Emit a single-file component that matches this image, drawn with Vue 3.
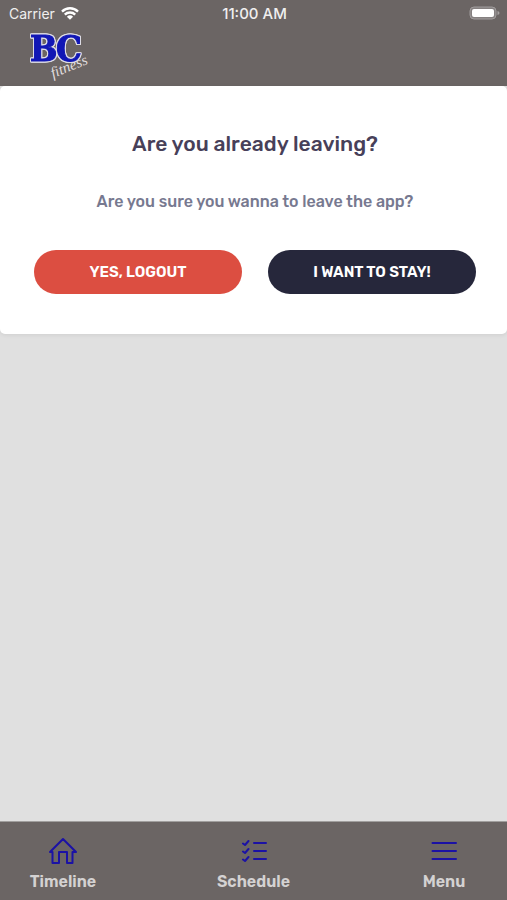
<template>
  <div class="app">
    <header class="header">
      <div class="status">
        <div class="carrier">
          <span>Carrier</span>
          <svg class="wifi" viewBox="0 0 18 13" aria-hidden="true">
            <path d="M1 4.6a11.4 11.4 0 0 1 16 0M3.8 7.6a7.4 7.4 0 0 1 10.4 0" />
            <path class="dot" d="M9 12.8L5.9 9.7a4.5 4.5 0 0 1 6.2 0z" />
          </svg>
        </div>
        <time class="clock">11:00 AM</time>
        <svg class="battery" viewBox="0 0 31 14" aria-hidden="true">
          <rect class="shell" x="1" y="1" width="26" height="12" rx="4" />
          <rect class="charge" x="3" y="3" width="22" height="8" rx="2" />
          <path class="tip" d="M28.5 5q2 .5 2 2t-2 2z" />
        </svg>
      </div>
      <svg class="logo" viewBox="0 0 64 56" role="img" aria-label="BC fitness">
        <g class="initials">
          <text x="2" y="35">B</text>
          <text x="28" y="35">C</text>
        </g>
        <text class="script" x="25" y="52" transform="rotate(-22 25 52)">fitness</text>
      </svg>
    </header>

    <main class="content">
      <section class="card">
        <h1>Are you already leaving?</h1>
        <p>Are you sure you wanna to leave the app?</p>
        <div class="actions">
          <button type="button" class="btn danger">YES, LOGOUT</button>
          <button type="button" class="btn dark">I WANT TO STAY!</button>
        </div>
      </section>
    </main>

    <nav class="tabs">
      <a v-for="tab in tabs" :key="tab.name" :href="tab.href" class="tab">
        <svg class="icon" viewBox="0 0 30 30" aria-hidden="true">
          <path :d="tab.path" />
        </svg>
        <span>{{ tab.name }}</span>
      </a>
    </nav>
  </div>
</template>

<script setup>
const tabs = [
  {
    name: 'Timeline',
    href: '#timeline',
    path: 'M2 16L15 3l13 13h-3.500v11H19V16h-8v11H4.500V16H2'
  },
  {
    name: 'Schedule',
    href: '#schedule',
    path: 'M4 7.500l2 1.500 3.500-4M4 15.500l2 1.500 3.500-4M4 23.500l2 1.500 3.500-4M15 7h12M15 15h12M15 23h12'
  },
  {
    name: 'Menu',
    href: '#menu',
    path: 'M3.500 7h23.500M3.500 15h23.500M3.500 23h23.500'
  }
]
</script>

<style>
body {
  background: #e0e0e0;
}
</style>

<style scoped>
.app {
  display: flex;
  flex-direction: column;
  min-height: 100vh;
  background: #e0e0e0;
  font-family: Rubik, Roboto, "Liberation Sans", sans-serif;
}

.header {
  height: 86px;
  background: #6b6564;
}

.status {
  display: grid;
  grid-template-columns: 1fr auto 1fr;
  align-items: center;
  height: 26px;
  padding: 0 7px 0 9px;
  color: #f0efef;
  font-family: Inter, sans-serif;
  font-size: 14px;
}

.carrier {
  display: flex;
  align-items: center;
  gap: 6px;
}

.clock {
  font-size: 15px;
  font-weight: 500;
}

.wifi {
  width: 18px;
  height: 13px;
  fill: none;
  stroke: #fff;
  stroke-width: 2.4;
}

.wifi .dot {
  fill: #fff;
  stroke: none;
}

.battery {
  justify-self: end;
  width: 31px;
  height: 14px;
}

.shell {
  fill: #858080;
  stroke: #a09c9c;
}

.charge {
  fill: #fff;
}

.tip {
  fill: #a5a1a1;
}

.logo {
  display: block;
  width: 64px;
  height: 56px;
  margin-left: 28px;
}

.initials {
  fill: #1117b5;
  stroke: #1117b5;
  stroke-width: 1;
  filter: drop-shadow(1px 0 0 #dcdbe4) drop-shadow(-1px 0 0 #dcdbe4) drop-shadow(0 1px 0 #dcdbe4) drop-shadow(0 -1px 0 #dcdbe4);
  font-family: "DejaVu Serif Condensed", "DejaVu Serif", serif;
  font-size: 36px;
  font-weight: 700;
}

.script {
  fill: #e2dfdf;
  font-family: "Liberation Serif", serif;
  font-size: 15px;
  font-style: italic;
}

.content {
  flex: 1;
}

.card {
  padding: 44px 31px 40px 34px;
  border-radius: 5px;
  background: #fff;
  box-shadow: 0 1px 4px rgba(0, 0, 0, 0.08);
  text-align: center;
}

h1 {
  margin: 0;
  color: #474059;
  font-size: 21px;
  font-weight: 500;
  line-height: 28px;
}

p {
  margin: 32px 0 36px;
  color: #777990;
  font-size: 16px;
  font-weight: 500;
  line-height: 24px;
}

.actions {
  display: grid;
  grid-template-columns: 1fr 1fr;
  gap: 26px;
}

.btn {
  height: 44px;
  padding: 0;
  border: 0;
  border-radius: 22px;
  color: #fff;
  font-family: inherit;
  font-size: 15px;
  font-weight: 600;
  cursor: pointer;
}

.danger {
  background: #dc4e41;
}

.dark {
  background: #26273b;
}

.tabs {
  display: flex;
  justify-content: space-between;
  height: 79px;
  padding: 14px 26px 0;
  border-top: 1px solid #a19f9e;
  background: #6b6564;
  box-sizing: border-box;
}

.tab {
  display: flex;
  flex-direction: column;
  align-items: center;
  gap: 6px;
  width: 74px;
  color: #d4d2d2;
  font-size: 16px;
  font-weight: 600;
  line-height: 20px;
  text-decoration: none;
}

.icon {
  width: 30px;
  height: 30px;
  fill: none;
  stroke: #1b12a5;
  stroke-width: 2;
  stroke-linecap: round;
  stroke-linejoin: round;
}
</style>
